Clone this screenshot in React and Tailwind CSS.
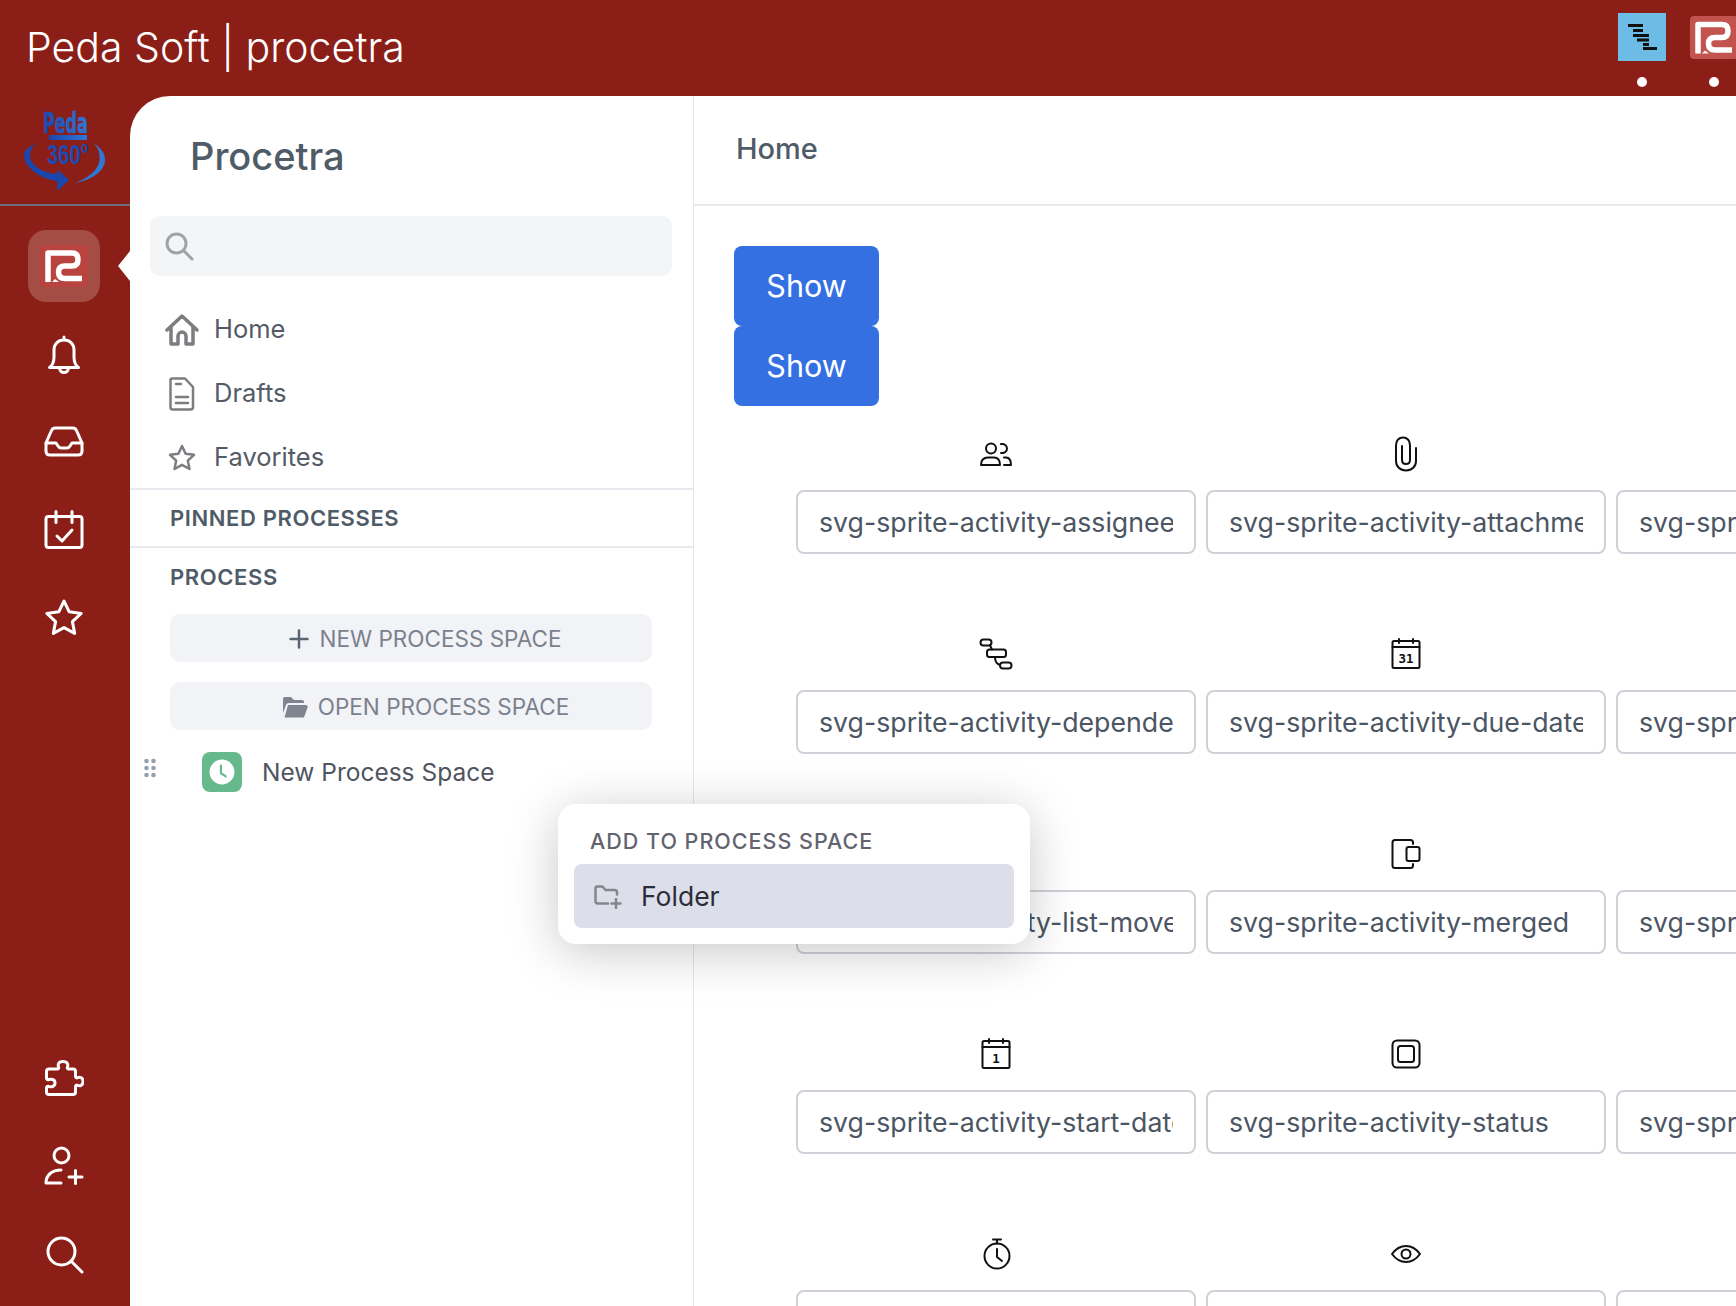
import { useState } from 'react';

const navTop = [
  <svg key="bell" width="40" height="40" viewBox="0 0 40 40" fill="none" stroke="currentColor" strokeWidth="3" strokeLinecap="round" strokeLinejoin="round">
    <path d="M20 3v3M20 6c-6.500 0-10 4.500-10 10v7c0 4-1 8-4.500 10.500h29C31 31 30 27 30 23v-7c0-5.500-3.500-10-10-10z" />
    <path d="M15.500 34c.5 3 2.300 4.500 4.500 4.500s4-1.500 4.500-4.500" />
  </svg>,
  <svg key="inbox" width="40" height="40" viewBox="0 0 40 40" fill="none" stroke="currentColor" strokeWidth="3" strokeLinecap="round" strokeLinejoin="round">
    <path d="M2 21l5.500-12.500c.6-1.500 2-2.500 3.700-2.500h17.600c1.700 0 3.100 1 3.700 2.500L38 21v8c0 2.500-1.500 4-4 4H6c-2.500 0-4-1.500-4-4z" />
    <path d="M2 21h10l2 3c.7 1.200 1.700 2 3 2h6c1.300 0 2.300-.8 3-2l2-3h10" />
  </svg>,
  <svg key="cal" width="40" height="40" viewBox="0 0 40 40" fill="none" stroke="currentColor" strokeWidth="3" strokeLinecap="round" strokeLinejoin="round">
    <rect x="2" y="6.500" width="36" height="31" rx="2.500" />
    <path d="M12 1.500v11M28 1.500v11M13 26l5 5 10-11" />
  </svg>,
  <svg key="star" width="40" height="40" viewBox="0 0 40 40" fill="none" stroke="currentColor" strokeWidth="3" strokeLinecap="round" strokeLinejoin="round">
    <path d="M20 3l5.200 10.800 12 1.600-8.800 8.200 2.300 11.800L20 29.600 9.300 35.400l2.300-11.800-8.800-8.200 12-1.600z" />
  </svg>,
];

const navBottom = [
  <svg key="puzzle" width="40" height="40" viewBox="0 0 40 40" fill="none" stroke="currentColor" strokeWidth="3" strokeLinecap="round" strokeLinejoin="round" className="translate-y-[2px]">
    <path d="M5 9h8c1.500 0 2-1 1.500-2.200C13.800 5 14 1.500 19 1.500s5.200 3.500 4.500 5.300C23 8 23.500 9 25 9h4c1.500 0 2.500 1 2.500 2.500v4.800c0 1.400 1 1.900 2.200 1.400 1.800-.7 5.300-.5 5.300 3.800s-3.500 4.500-5.300 3.800c-1.200-.5-2.200 0-2.200 1.400v5.300c0 1.500-1 2.500-2.500 2.500H5c-1.500 0-2.500-1-2.500-2.500V28c0-1.300 1-2 2.300-1.500 2 .7 6.200.4 6.200-3.500s-4.200-4.200-6.200-3.500C3.500 20 2.500 19.300 2.500 18v-6.500C2.500 10 3.500 9 5 9z" />
  </svg>,
  <svg key="useradd" width="40" height="40" viewBox="0 0 40 40" fill="none" stroke="currentColor" strokeWidth="3" strokeLinecap="round" strokeLinejoin="round">
    <circle cx="17.500" cy="9.500" r="7.500" />
    <path d="M2 37c0-8 6-13 15-13M2 37h15M25 31h13M31.500 24.500v13" />
  </svg>,
  <svg key="search" width="40" height="40" viewBox="0 0 40 40" fill="none" stroke="currentColor" strokeWidth="3" strokeLinecap="round" strokeLinejoin="round">
    <circle cx="17.500" cy="17.500" r="13.500" />
    <path d="M27.500 27.500L38 38" />
  </svg>,
];

const fields = [
  { icon: 'assignee', value: 'svg-sprite-activity-assignee' },
  { icon: 'attachment', value: 'svg-sprite-activity-attachment' },
  { icon: null, value: 'svg-sprite-activity' },
  { icon: 'dependency', value: 'svg-sprite-activity-dependency' },
  { icon: 'due', value: 'svg-sprite-activity-due-date' },
  { icon: null, value: 'svg-sprite-activity' },
  { icon: null, value: 'svg-sprite-activity-list-move' },
  { icon: 'merged', value: 'svg-sprite-activity-merged' },
  { icon: null, value: 'svg-sprite-activity' },
  { icon: 'start', value: 'svg-sprite-activity-start-date' },
  { icon: 'status', value: 'svg-sprite-activity-status' },
  { icon: null, value: 'svg-sprite-activity' },
  { icon: 'timer', value: 'svg-sprite-activity-timer' },
  { icon: 'watch', value: 'svg-sprite-activity-watch' },
  { icon: null, value: 'svg-sprite-activity' },
];

function SpriteIcon({ name }) {
  const common = { width: 36, height: 36, viewBox: '0 0 36 36', fill: 'none', stroke: '#111', strokeWidth: 2, strokeLinecap: 'round', strokeLinejoin: 'round' };
  if (name === 'assignee') return (
    <svg {...common}>
      <circle cx="13" cy="12.500" r="5" />
      <path d="M3 29c0-5 3-7.500 7-7.500h6c4 0 6 3 6 7.500z" />
      <path d="M23 8c3.500-.5 6 1.500 6 4.500s-2.500 5-6 4.500M26 21.500h2c3.500 0 5 3 5 7.500h-7" />
    </svg>
  );
  if (name === 'attachment') return (
    <svg {...common}>
      <path d="M28 12v13c0 5.500-4 9.500-10 9.500S8 30.500 8 25V9c0-4.500 3-7.500 7-7.500s7 3 7 7.500v15c0 2.500-1.800 4-4 4s-4-1.500-4-4V10" />
    </svg>
  );
  if (name === 'dependency') return (
    <svg {...common}>
      <rect x="2.500" y="3.500" width="11" height="6" rx="3" />
      <rect x="9" y="13.500" width="19" height="7.500" rx="2.500" />
      <rect x="22" y="26.500" width="11.500" height="6" rx="3" />
      <path d="M12 9.500l2 4M17 21c0 4 2 7 5 8" />
    </svg>
  );
  if (name === 'due' || name === 'start') return (
    <svg {...common}>
      <rect x="4.500" y="5" width="27" height="27" rx="1.500" />
      <path d="M4.500 11h27M11 3v4M25 3v4" />
      <text x="18" y="27" textAnchor="middle" fontSize="12.500" fontWeight="700" fill="#111" stroke="none" fontFamily="'DejaVu Sans Mono', monospace">{name === 'due' ? '31' : '1'}</text>
    </svg>
  );
  if (name === 'merged') return (
    <svg {...common}>
      <path d="M25 8V6.500C25 5 24 4 22.500 4H7C5.500 4 4.500 5 4.500 6.500v23C4.500 31 5.500 32 7 32h15.500c1.500 0 2.500-1 2.500-2.500V28" />
      <rect x="18.500" y="11" width="13" height="14" rx="2" />
    </svg>
  );
  if (name === 'status') return (
    <svg {...common}>
      <rect x="4.500" y="4.500" width="27" height="27" rx="4.500" />
      <rect x="10" y="10" width="16" height="16" rx="2.500" />
    </svg>
  );
  if (name === 'timer') return (
    <svg {...common}>
      <circle cx="19" cy="20" r="12.500" />
      <path d="M15 3.500h8M19 3.500v4M19 13v8l5 4" />
    </svg>
  );
  if (name === 'watch') return (
    <svg {...common}>
      <path d="M4 18c4-5.500 8.500-8 14-8s10 2.500 14 8c-4 5.500-8.500 8-14 8s-10-2.500-14-8z" />
      <circle cx="18" cy="18" r="4.500" />
    </svg>
  );
  return null;
}

function BrandMark({ className }) {
  return (
    <svg className={className} viewBox="0 0 48 42" fill="none" stroke="#fff" strokeWidth="5.500" strokeLinejoin="round" strokeLinecap="butt">
      <path d="M8 37V8H32Q38 8 38 14.500Q38 21 32 21H25Q18.500 21 18.500 27Q18.500 33.500 25 33.500H42" />
      <path d="M12 37l3-3 4 3z" fill="#fff" stroke="none" />
    </svg>
  );
}

function PedaLogo() {
  return (
    <svg width="86" height="94" viewBox="0 -10 86 94" fill="none" className="-mt-[10px]">
      <defs>
        <linearGradient id="peda" x1="0" y1="0" x2="1" y2="0">
          <stop offset="0" stopColor="#1b47ad" />
          <stop offset="1" stopColor="#2e78d8" />
        </linearGradient>
      </defs>
      <g transform="translate(22 25) scale(0.55 1)">
        <text x="0" y="0" fontSize="29" fontWeight="700" fontFamily="'DejaVu Sans', sans-serif" fill="url(#peda)" stroke="url(#peda)" strokeWidth="0.6">Peda</text>
      </g>
      <rect x="28" y="27" width="38" height="5" fill="url(#peda)" />
      <g transform="translate(26 56) scale(0.72 1)">
        <text x="0" y="0" fontSize="28" fontWeight="700" fontFamily="'Liberation Sans', sans-serif" fill="#1c4ab5">360°</text>
      </g>
      <path d="M14.700 35.300C6 40 3 43 3 47.500C3 58 18 71 36.300 73V83L48 72L36.300 61.300V66C22 65 9 57 9 47.500C9 43 11 39 14.700 35.300z" fill="#1b47ad" />
      <path d="M73 35.300C81 41 84 46 84 52C84 62 72 72 53 75.300C66 71 78.700 62 78.700 50.300C78.700 44 77 40 73 35.300z" fill="#2e78d8" />
    </svg>
  );
}

function NavLink({ icon, label }) {
  return (
    <div className="flex h-16 items-center gap-[18px] pl-[38px] pt-[1px] text-[25.5px] text-[#555b66]">
      <span className="flex h-7 w-7 items-center justify-center text-[#7b7d80]">{icon}</span>
      <span>{label}</span>
    </div>
  );
}

export default function App() {
  const [search] = useState('');

  return (
    <div className="flex h-[1306px] w-[1736px] flex-col overflow-hidden bg-[#8b1e17] font-[Inter,sans-serif]">
      {/* top bar */}
      <header className="flex h-24 shrink-0 items-start overflow-hidden pl-[26px] text-white">
        <div className="mt-[19px] text-[41px] font-light leading-[56px]">Peda Soft | procetra</div>
        <div className="ml-auto mr-[-2px] flex gap-6 pt-[13px]">
          <div className="flex w-12 flex-col items-center gap-4">
            <div className="h-12 w-12 bg-[#6cbce6] p-2">
              <svg viewBox="0 0 32 32" fill="#111" className="h-8 w-8">
                <rect x="2" y="3" width="15" height="3" />
                <rect x="7" y="8" width="10" height="3" />
                <rect x="7" y="13" width="16" height="3" />
                <rect x="11" y="17.500" width="12" height="3" />
                <rect x="17" y="22" width="6" height="3" />
                <rect x="17" y="26" width="14" height="3" />
              </svg>
            </div>
            <div className="h-[10px] w-[10px] rounded-full bg-white" />
          </div>
          <div className="flex w-12 flex-col items-center gap-4">
            <div className="flex h-12 items-center">
              <div className="h-[43px] w-12 rounded bg-[#c2534f]">
                <BrandMark className="h-[43px] w-12" />
              </div>
            </div>
            <div className="h-[10px] w-[10px] rounded-full bg-white" />
          </div>
        </div>
      </header>

      <div className="flex min-h-0 flex-1">
        {/* icon rail */}
        <aside className="flex w-[130px] shrink-0 flex-col text-white">
          <div className="flex h-[110px] items-center justify-center border-b-2 border-[#6d6f78] pr-[2px]">
            <PedaLogo />
          </div>
          <div className="mt-4 flex h-[88px] items-center justify-center pr-[2px]">
            <div className="flex h-[72px] w-[72px] items-center justify-center rounded-[18px] bg-[#a34d45]">
              <div className="h-[42px] w-12 rounded-sm bg-[#b8433f]">
                <BrandMark className="h-[42px] w-12" />
              </div>
            </div>
          </div>
          {navTop.map((icon, i) => (
            <div key={i} className="flex h-[88px] items-center justify-center pr-[2px]">{icon}</div>
          ))}
          <div className="mt-auto pb-2">
            {navBottom.map((icon, i) => (
              <div key={i} className="flex h-[88px] items-center justify-center pr-[2px]">{icon}</div>
            ))}
          </div>
        </aside>

        <div className="relative flex min-w-0 flex-1 rounded-tl-[40px] bg-white">
          {/* active marker */}
          <div className="absolute left-[-12px] top-[155px] h-[30px] w-[12px] bg-white [clip-path:polygon(100%_0,0_50%,100%_100%)]" />

          {/* process sidebar */}
          <aside className="flex w-[564px] shrink-0 flex-col border-r border-[#e5e7eb]">
            <div className="flex h-[120px] items-center pl-[60px] text-[38px] font-medium text-[#4f5b67]">Procetra</div>
            <div className="ml-5 mr-[21px] flex h-[60px] items-center rounded-[10px] bg-[#f4f5f7] pl-[14px] text-[#a0a3a6]">
              <svg width="30" height="30" viewBox="0 0 30 30" fill="none" stroke="currentColor" strokeWidth="3" strokeLinecap="round">
                <circle cx="12.500" cy="12.500" r="9.500" />
                <path d="M20 20l8 8" />
              </svg>
              <input readOnly value={search} className="min-w-0 flex-1 bg-transparent px-3 outline-none" />
            </div>
            <nav className="mt-[21px] h-[193px] border-b-2 border-[#e9eaf0]">
              <NavLink label="Home" icon={
                <svg width="34" height="32" viewBox="0 0 34 32" fill="none" stroke="currentColor" strokeWidth="3.500" strokeLinejoin="round" strokeLinecap="round" className="shrink-0">
                  <path d="M2 16L17 2l15 14M6 13v17h7v-8c0-2 2-4 4-4s4 2 4 4v8h7V13" />
                </svg>
              } />
              <NavLink label="Drafts" icon={
                <svg width="26" height="34" viewBox="0 0 26 34" fill="none" stroke="currentColor" strokeWidth="2.500" strokeLinejoin="round" strokeLinecap="round">
                  <path d="M3 1.500h13L24 10v20c0 1.500-1 2.500-2.500 2.500h-18C2 32.500 1.500 31.500 1.500 30V3C1.500 2 2 1.500 3 1.500zM7 7h5M7 20h12M7 26h12" />
                </svg>
              } />
              <NavLink label="Favorites" icon={
                <svg width="28" height="28" viewBox="0 0 28 28" fill="none" stroke="currentColor" strokeWidth="2.500" strokeLinejoin="round">
                  <path d="M14 2l3.600 7.800 8.400 1-6.200 5.800 1.700 8.400L14 20.800 6.500 25l1.700-8.400L2 10.800l8.400-1z" />
                </svg>
              } />
            </nav>
            <div className="flex h-[58px] items-center border-b-2 border-[#e9eaf0] pl-10 pt-[1px] text-[22px] font-semibold tracking-[0.6px] text-[#4f5b67]">PINNED PROCESSES</div>
            <div className="flex h-[58px] items-center pl-10 text-[22px] font-semibold tracking-[0.6px] text-[#4f5b67]">PROCESS</div>
            <div className="ml-10 mt-2 flex w-[482px] flex-col gap-5 text-[22.5px] text-[#7b818e]">
              <div className="flex h-12 items-center justify-center gap-[10px] rounded-[10px] bg-[#f1f3f7] pl-[29px] pt-[1px]">
                <svg width="20" height="20" viewBox="0 0 20 20" fill="none" stroke="#5b6472" strokeWidth="2.500" strokeLinecap="round"><path d="M10 1.500v17M1.500 10h17" /></svg>
                <span>NEW PROCESS SPACE</span>
              </div>
              <div className="flex h-12 items-center justify-center gap-[10px] rounded-[10px] bg-[#f1f3f7] pl-[29px] pt-[1px]">
                <svg width="26" height="22" viewBox="0 0 26 22" fill="#7f8490"><path d="M1 3c0-1.200.8-2 2-2h6l3 3h8c1.200 0 2 .8 2 2v1H7c-1.500 0-2.500.8-3 2l-3 8zM6 9h18c1.200 0 2 1 1.600 2.200L22.500 20c-.3 1-1 1.500-2 1.500H2.500z" /></svg>
                <span>OPEN PROCESS SPACE</span>
              </div>
            </div>
            <div className="mt-[22px] flex h-10 items-center pl-[14px] text-[24.5px] text-[#4f5560]">
              <svg width="12" height="20" viewBox="0 0 12 20" fill="#94a0ae" className="mb-2">
                <circle cx="2.500" cy="3" r="2.300" /><circle cx="9.500" cy="3" r="2.300" />
                <circle cx="2.500" cy="10" r="2.300" /><circle cx="9.500" cy="10" r="2.300" />
                <circle cx="2.500" cy="17" r="2.300" /><circle cx="9.500" cy="17" r="2.300" />
              </svg>
              <div className="ml-[46px] flex h-10 w-10 items-center justify-center rounded-lg bg-[#65b98a]">
                <svg width="26" height="26" viewBox="0 0 24 24">
                  <circle cx="12" cy="12" r="11.500" fill="#fff" />
                  <path d="M11 6v7l4.500 3" fill="none" stroke="#65b98a" strokeWidth="2" strokeLinecap="round" />
                </svg>
              </div>
              <span className="ml-5">New Process Space</span>
            </div>
          </aside>

          {/* main content */}
          <main className="min-w-0 flex-1 overflow-hidden">
            <div className="flex h-[110px] items-center border-b-2 border-[#e9eaf0] pb-[2px] pl-[42px] text-[29px] font-medium text-[#4f5b67]">Home</div>
            <div className="ml-10 mt-[40px] flex w-[145px] flex-col">
              <button className="h-20 rounded-lg bg-[#3570e2] text-[30.5px] text-white">Show</button>
              <button className="h-20 rounded-lg bg-[#3570e2] text-[30.5px] text-white">Show</button>
            </div>
            <div className="ml-[102px] mt-[30px] grid w-[1220px] grid-cols-3 gap-x-[10px]">
              {fields.map((f, i) => (
                <div key={i} className="flex h-[200px] flex-col items-center">
                  <div className="mb-[18px] flex h-9 items-center justify-center">
                    {f.icon && <SpriteIcon name={f.icon} />}
                  </div>
                  <input
                    readOnly
                    value={f.value}
                    className="h-16 w-full rounded-lg border-2 border-[#ced2d8] bg-white px-[21px] text-[26.7px] text-[#4b5563] outline-none"
                  />
                </div>
              ))}
            </div>
          </main>

          {/* add menu */}
          <div className="absolute left-[428px] top-[708px] w-[472px] rounded-[18px] bg-white px-4 pb-4 pt-[22px] shadow-[0_8px_50px_rgba(0,0,0,0.22)]">
            <div className="mb-2 pl-4 text-[21.5px] font-medium leading-[30px] tracking-[1px] text-[#62636f]">ADD TO PROCESS SPACE</div>
            <div className="flex h-16 items-center gap-[19px] rounded-lg bg-[#dcdee9] pl-5 pt-[1px] text-[26.5px] text-[#2b2e38]">
              <svg width="28" height="24" viewBox="0 0 28 24" fill="none" stroke="#85868c" strokeWidth="2.500" strokeLinecap="round" strokeLinejoin="round">
                <path d="M14 18.500H4C2.500 18.500 1.500 17.500 1.500 16V3.500C1.500 2 2.500 1.500 3.500 1.500h5l3 3.500h9c1.500 0 2.500 1 2.500 2.500v2" />
                <path d="M22 14v9M17.500 18.500h9" />
              </svg>
              <span>Folder</span>
            </div>
          </div>
        </div>
      </div>
    </div>
  );
}
